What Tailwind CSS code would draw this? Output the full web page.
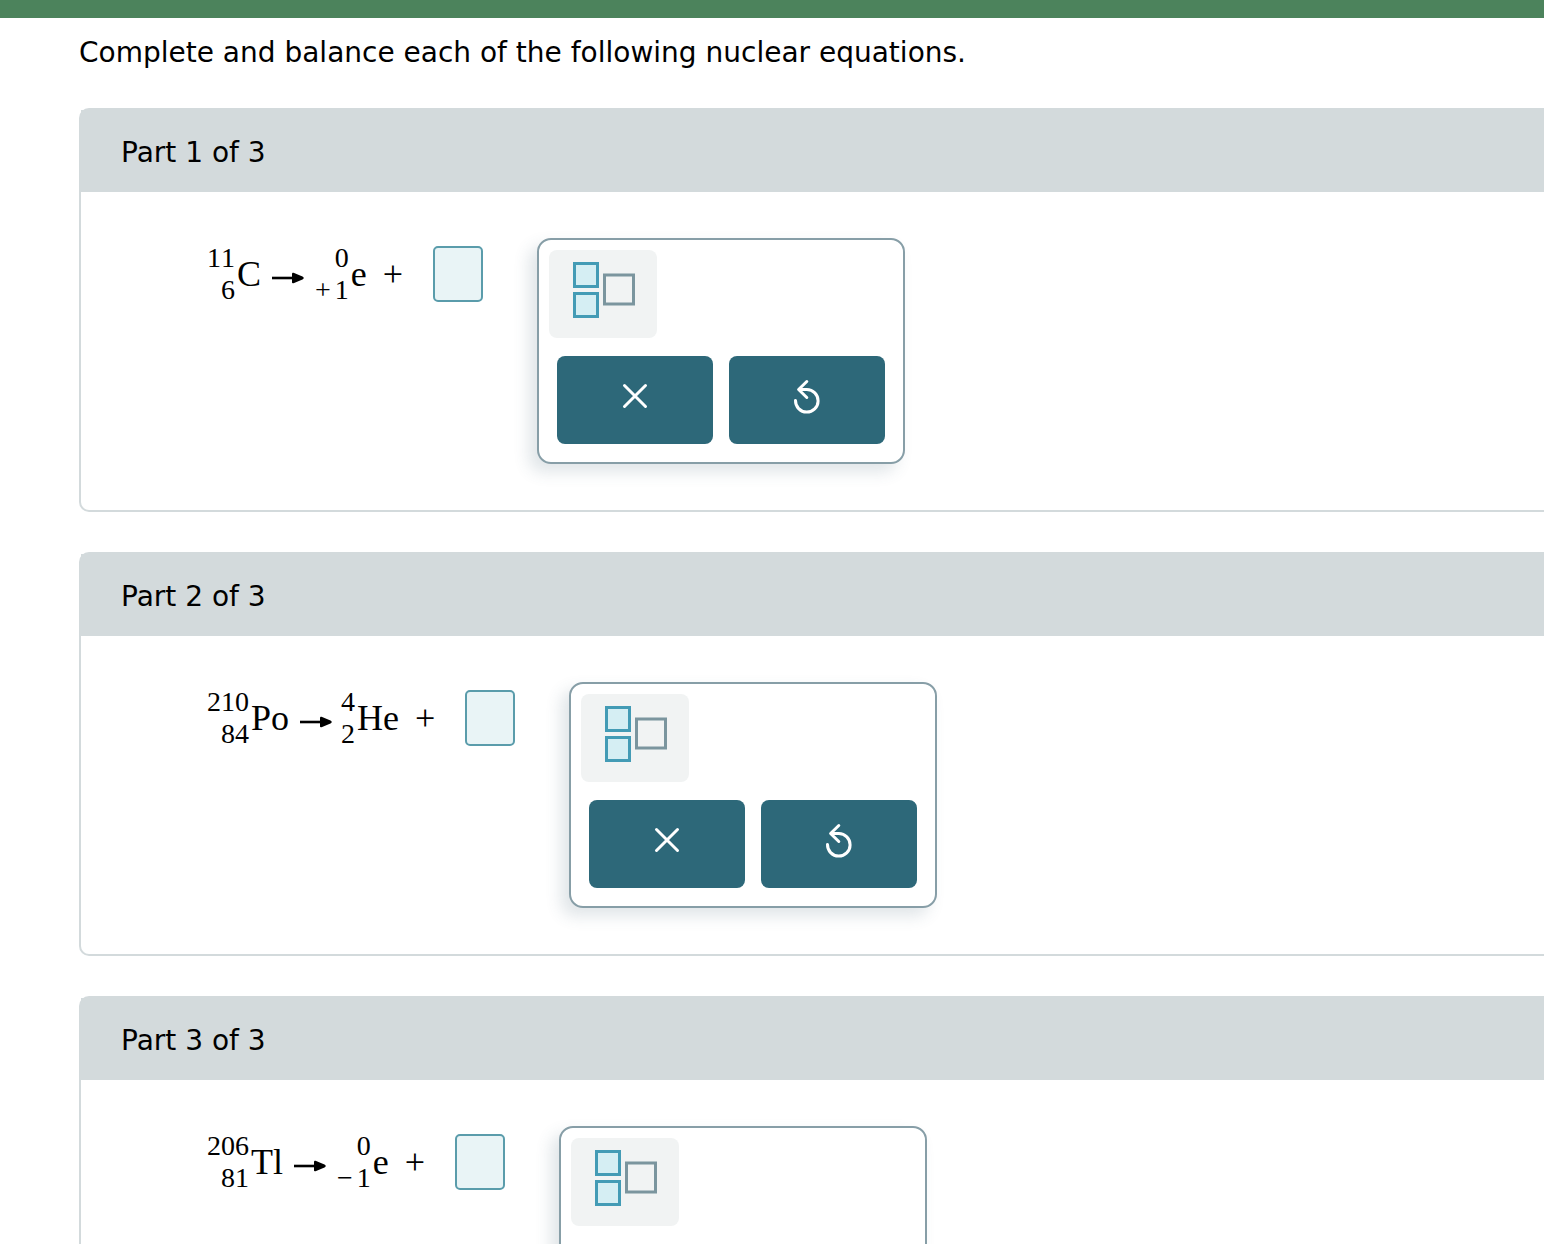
<!DOCTYPE html>
<html lang="en">
<head>
    <meta charset="UTF-8">
    <meta name="viewport" content="width=device-width, initial-scale=1.0">
    <title>Nuclear Equations</title>
    <!-- Tailwind CSS -->
    <script src="https://cdn.jsdelivr.net/npm/@tailwindcss/browser@4"></script>
</head>
<body class="h-screen overflow-hidden bg-white text-black font-['Verdana','DejaVu_Sans',sans-serif]">
    <!-- Icons shared by the three answer palettes -->
    <svg class="hidden" aria-hidden="true">
        <symbol id="icon-arrow" viewBox="0 0 32 12">
            <path d="M0 6H22" stroke="currentColor" stroke-width="2.600"/>
            <path d="M20 1.500Q20 0.500 21.500 0.800L30.500 4.600Q33 6 30.500 7.400L21.500 11.200Q20 11.500 20 10.500Z" fill="currentColor"/>
        </symbol>
        <symbol id="icon-scripts" viewBox="0 0 62 56">
            <rect x="1.500" y="1.500" width="23" height="23" fill="#d5eef3" stroke="#439bb5" stroke-width="3"/>
            <rect x="1.500" y="31.500" width="23" height="23" fill="#d5eef3" stroke="#439bb5" stroke-width="3"/>
            <rect x="31.500" y="13" width="29" height="29" fill="none" stroke="#7b959e" stroke-width="3"/>
        </symbol>
        <symbol id="icon-clear" viewBox="0 0 40 40">
            <path d="M9.500 9.500L30.500 30.500M30.500 9.500L9.500 30.500" fill="none" stroke="currentColor" stroke-width="3" stroke-linecap="round"/>
        </symbol>
        <symbol id="icon-reset" viewBox="0 0 40 40">
            <path d="M8.500 24.500A11.300 11.300 0 1 0 19.800 13.500H12M19.800 5.500L11.600 13.500L19.800 21.500" fill="none" stroke="currentColor" stroke-width="3" stroke-linecap="round" stroke-linejoin="round"/>
        </symbol>
    </svg>

    <div class="h-[18px] bg-[#4c835c]"></div>

    <main class="pl-[79px]">
        <h1 class="pt-[17px] pb-[37px] text-[28px] leading-9">Complete and balance each of the following nuclear equations.</h1>

        <div class="flex flex-col gap-10">
            <!-- Part 1 -->
            <section class="rounded-l-[10px] border-2 border-r-0 border-[#d3dadc]">
                <h2 class="bg-[#d3dadc] pt-[25px] pb-[21px] pl-10 text-[28px] leading-9">Part 1 of 3</h2>
                <div class="flex items-start pt-[46px] pb-[46px] pl-[126px]">
                    <div class="mt-1 flex h-16 items-center font-['Liberation_Serif',serif] text-[36px] leading-10 [font-kerning:none]">
                        <span class="mr-[2px] flex flex-col items-end text-[28px] leading-8"><span>11</span><span>6</span></span>
                        <span>C</span>
                        <svg class="mt-2 ml-[11px] mr-[11px] h-3 w-8"><use href="#icon-arrow"/></svg>
                        <span class="mr-[2px] flex flex-col items-end text-[28px] leading-8"><span>0</span><span class="flex gap-1"><span>+</span><span>1</span></span></span>
                        <span>e</span>
                        <span class="ml-4">+</span>
                        <input type="text" aria-label="Missing particle, part 1" class="ml-[30px] h-14 w-[50px] rounded-[5px] border-2 border-[#5a9cab] bg-[#e9f4f6] text-center text-[28px]">
                    </div>
                    <div class="ml-[54px] w-[368px] rounded-[14px] border-2 border-[#879ea7] bg-white pt-[10px] pb-[18px] shadow-[-8px_8px_16px_rgba(60,95,110,0.16)]">
                        <button type="button" aria-label="Superscript and subscript" class="ml-[10px] flex h-[88px] w-[108px] rounded-lg bg-[#f1f3f3] pt-3 pl-6">
                            <svg class="h-14 w-[62px]"><use href="#icon-scripts"/></svg>
                        </button>
                        <div class="mt-[18px] flex gap-4 px-[18px]">
                            <button type="button" aria-label="Clear" class="flex h-[88px] w-[156px] items-center justify-center rounded-lg bg-[#2d6879] pb-2 text-white">
                                <svg class="size-10"><use href="#icon-clear"/></svg>
                            </button>
                            <button type="button" aria-label="Reset" class="flex h-[88px] w-[156px] items-center justify-center rounded-lg bg-[#2d6879] pb-2 text-white">
                                <svg class="size-10"><use href="#icon-reset"/></svg>
                            </button>
                        </div>
                    </div>
                </div>
            </section>

            <!-- Part 2 -->
            <section class="rounded-l-[10px] border-2 border-r-0 border-[#d3dadc]">
                <h2 class="bg-[#d3dadc] pt-[25px] pb-[21px] pl-10 text-[28px] leading-9">Part 2 of 3</h2>
                <div class="flex items-start pt-[46px] pb-[46px] pl-[126px]">
                    <div class="mt-1 flex h-16 items-center font-['Liberation_Serif',serif] text-[36px] leading-10 [font-kerning:none]">
                        <span class="mr-[2px] flex flex-col items-end text-[28px] leading-8"><span>210</span><span>84</span></span>
                        <span>Po</span>
                        <svg class="mt-2 ml-[11px] mr-[9px] h-3 w-8"><use href="#icon-arrow"/></svg>
                        <span class="mr-[2px] flex flex-col items-end text-[28px] leading-8"><span>4</span><span>2</span></span>
                        <span>He</span>
                        <span class="ml-4">+</span>
                        <input type="text" aria-label="Missing particle, part 2" class="ml-[30px] h-14 w-[50px] rounded-[5px] border-2 border-[#5a9cab] bg-[#e9f4f6] text-center text-[28px]">
                    </div>
                    <div class="ml-[54px] w-[368px] rounded-[14px] border-2 border-[#879ea7] bg-white pt-[10px] pb-[18px] shadow-[-8px_8px_16px_rgba(60,95,110,0.16)]">
                        <button type="button" aria-label="Superscript and subscript" class="ml-[10px] flex h-[88px] w-[108px] rounded-lg bg-[#f1f3f3] pt-3 pl-6">
                            <svg class="h-14 w-[62px]"><use href="#icon-scripts"/></svg>
                        </button>
                        <div class="mt-[18px] flex gap-4 px-[18px]">
                            <button type="button" aria-label="Clear" class="flex h-[88px] w-[156px] items-center justify-center rounded-lg bg-[#2d6879] pb-2 text-white">
                                <svg class="size-10"><use href="#icon-clear"/></svg>
                            </button>
                            <button type="button" aria-label="Reset" class="flex h-[88px] w-[156px] items-center justify-center rounded-lg bg-[#2d6879] pb-2 text-white">
                                <svg class="size-10"><use href="#icon-reset"/></svg>
                            </button>
                        </div>
                    </div>
                </div>
            </section>

            <!-- Part 3 -->
            <section class="rounded-l-[10px] border-2 border-r-0 border-[#d3dadc]">
                <h2 class="bg-[#d3dadc] pt-[25px] pb-[21px] pl-10 text-[28px] leading-9">Part 3 of 3</h2>
                <div class="flex items-start pt-[46px] pb-[46px] pl-[126px]">
                    <div class="mt-1 flex h-16 items-center font-['Liberation_Serif',serif] text-[36px] leading-10 [font-kerning:none]">
                        <span class="mr-[2px] flex flex-col items-end text-[28px] leading-8"><span>206</span><span>81</span></span>
                        <span>Tl</span>
                        <svg class="mt-2 ml-[11px] mr-[11px] h-3 w-8"><use href="#icon-arrow"/></svg>
                        <span class="mr-[2px] flex flex-col items-end text-[28px] leading-8"><span>0</span><span class="flex gap-1"><span>−</span><span>1</span></span></span>
                        <span>e</span>
                        <span class="ml-4">+</span>
                        <input type="text" aria-label="Missing particle, part 3" class="ml-[30px] h-14 w-[50px] rounded-[5px] border-2 border-[#5a9cab] bg-[#e9f4f6] text-center text-[28px]">
                    </div>
                    <div class="ml-[54px] w-[368px] rounded-[14px] border-2 border-[#879ea7] bg-white pt-[10px] pb-[18px] shadow-[-8px_8px_16px_rgba(60,95,110,0.16)]">
                        <button type="button" aria-label="Superscript and subscript" class="ml-[10px] flex h-[88px] w-[108px] rounded-lg bg-[#f1f3f3] pt-3 pl-6">
                            <svg class="h-14 w-[62px]"><use href="#icon-scripts"/></svg>
                        </button>
                        <div class="mt-[18px] flex gap-4 px-[18px]">
                            <button type="button" aria-label="Clear" class="flex h-[88px] w-[156px] items-center justify-center rounded-lg bg-[#2d6879] pb-2 text-white">
                                <svg class="size-10"><use href="#icon-clear"/></svg>
                            </button>
                            <button type="button" aria-label="Reset" class="flex h-[88px] w-[156px] items-center justify-center rounded-lg bg-[#2d6879] pb-2 text-white">
                                <svg class="size-10"><use href="#icon-reset"/></svg>
                            </button>
                        </div>
                    </div>
                </div>
            </section>
        </div>
    </main>
</body>
</html>
